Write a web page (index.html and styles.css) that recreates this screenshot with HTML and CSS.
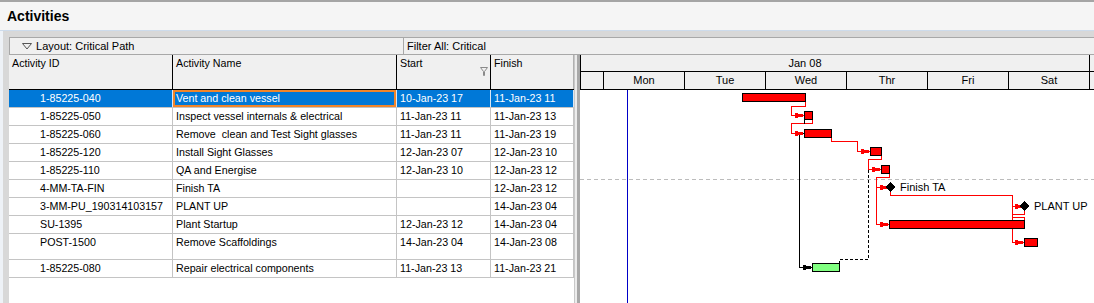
FILE: index.html
```html
<!DOCTYPE html>
<html lang="en">
<head>
  <meta charset="UTF-8">
  <title>Activities</title>
  <link rel="stylesheet" href="styles.css">
</head>
<body>

  <div class="title-bar">Activities</div>

  <div class="panel">
    <!-- layout and filter strip -->
    <div class="options-bar">
      <div class="layout-name">
        <svg class="drop" width="10" height="7" viewBox="0 0 10 7"><polygon points="0.5,0.5 9.5,0.5 5,6" fill="none" stroke="#555"/></svg>
        Layout: Critical Path
      </div>
      <div class="filter-name">Filter All: Critical</div>
    </div>

    <div class="views">
      <!-- activity table -->
      <div class="table">
        <div class="row head">
          <div class="cell">Activity ID</div>
          <div class="cell">Activity Name</div>
          <div class="cell sorted">
            <span>Start</span>
            <svg class="sort-mark" width="8" height="9" viewBox="0 0 8 9"><path d="M0.5 0.5 H7.5 L4.5 4.5 V8.5 H3.5 V4.5 Z" fill="none" stroke="#8a8a8a"/></svg>
          </div>
          <div class="cell">Finish</div>
        </div>

        <div class="row selected">
          <div class="cell id">1-85225-040</div>
          <div class="cell name">Vent and clean vessel</div>
          <div class="cell">10-Jan-23 17</div>
          <div class="cell">11-Jan-23 11</div>
        </div>
        <div class="row">
          <div class="cell id">1-85225-050</div>
          <div class="cell">Inspect vessel internals &amp; electrical</div>
          <div class="cell">11-Jan-23 11</div>
          <div class="cell">11-Jan-23 13</div>
        </div>
        <div class="row">
          <div class="cell id">1-85225-060</div>
          <div class="cell">Remove &nbsp;clean and Test Sight glasses</div>
          <div class="cell">11-Jan-23 11</div>
          <div class="cell">11-Jan-23 19</div>
        </div>
        <div class="row">
          <div class="cell id">1-85225-120</div>
          <div class="cell">Install Sight Glasses</div>
          <div class="cell">12-Jan-23 07</div>
          <div class="cell">12-Jan-23 10</div>
        </div>
        <div class="row">
          <div class="cell id">1-85225-110</div>
          <div class="cell">QA and Energise</div>
          <div class="cell">12-Jan-23 10</div>
          <div class="cell">12-Jan-23 12</div>
        </div>
        <div class="row">
          <div class="cell id">4-MM-TA-FIN</div>
          <div class="cell">Finish TA</div>
          <div class="cell"></div>
          <div class="cell">12-Jan-23 12</div>
        </div>
        <div class="row">
          <div class="cell id">3-MM-PU_190314103157</div>
          <div class="cell">PLANT UP</div>
          <div class="cell"></div>
          <div class="cell">14-Jan-23 04</div>
        </div>
        <div class="row">
          <div class="cell id">SU-1395</div>
          <div class="cell">Plant Startup</div>
          <div class="cell">12-Jan-23 12</div>
          <div class="cell">14-Jan-23 04</div>
        </div>
        <div class="row tall">
          <div class="cell id">POST-1500</div>
          <div class="cell">Remove Scaffoldings</div>
          <div class="cell">14-Jan-23 04</div>
          <div class="cell">14-Jan-23 08</div>
        </div>
        <div class="row">
          <div class="cell id">1-85225-080</div>
          <div class="cell">Repair electrical components</div>
          <div class="cell">11-Jan-23 13</div>
          <div class="cell">11-Jan-23 21</div>
        </div>
      </div>

      <div class="splitter"></div>

      <!-- gantt chart -->
      <div class="gantt">
        <div class="timescale">
          <div class="week">
            <div class="week-cell">Jan 08</div>
          </div>
          <div class="days">
            <div class="day first"></div>
            <div class="day">Mon</div>
            <div class="day">Tue</div>
            <div class="day">Wed</div>
            <div class="day">Thr</div>
            <div class="day">Fri</div>
            <div class="day">Sat</div>
          </div>
        </div>

        <svg class="chart" width="514" height="213" viewBox="0 0 514 213" shape-rendering="crispEdges">
          <!-- data date + group divider -->
          <line x1="47.5" y1="0" x2="47.5" y2="213" stroke="#0000c8"/>
          <line x1="0" y1="89.5" x2="514" y2="89.5" stroke="#bcbcbc" stroke-dasharray="4 3"/>

          <!-- critical links -->
          <g fill="none" stroke="#ff0000">
            <polyline points="225.5,12 225.5,16.5 211.5,16.5 211.5,25.5 224,25.5"/>
            <polyline points="232.5,30 232.5,33.5 211.5,33.5 211.5,43.5 224,43.5"/>
            <polyline points="251.5,48 251.5,51.5 277.5,51.5 277.5,61.5 290,61.5"/>
            <polyline points="301.5,66 301.5,69.5 288.5,69.5 288.5,79.5 301,79.5"/>
            <polyline points="309.5,84 309.5,87.5 296.5,87.5 296.5,134.5 309,134.5"/>
            <polyline points="296.5,97.5 306,97.5"/>
            <polyline points="310.5,101 310.5,105.5 432.5,105.5 432.5,152.5 444,152.5"/>
            <polyline points="432.5,116.5 440,116.5"/>
            <polyline points="444.5,120 444.5,124.5 432.5,124.5"/>
            <polyline points="444.5,130 444.5,127.5 432.5,127.5"/>
          </g>

          <!-- non critical links -->
          <g fill="none" stroke="#000">
            <line x1="224.5" y1="30" x2="224.5" y2="34"/>
            <polyline points="224,43.5 219.5,43.5 219.5,177.5 232,177.5"/>
            <polyline points="288.5,80 288.5,169.5 259.5,169.5 259.5,173" stroke-dasharray="3 2"/>
          </g>

          <!-- arrow heads -->
          <g fill="#ff0000">
            <rect x="215" y="23" width="3" height="5"/><rect x="218" y="24" width="5" height="3"/>
            <rect x="215" y="41" width="3" height="5"/><rect x="218" y="42" width="5" height="3"/>
            <rect x="281" y="59" width="3" height="5"/><rect x="284" y="60" width="5" height="3"/>
            <rect x="292" y="77" width="3" height="5"/><rect x="295" y="78" width="5" height="3"/>
            <rect x="300" y="95" width="3" height="5"/><rect x="303" y="96" width="4" height="3"/>
            <rect x="435" y="114" width="3" height="5"/><rect x="438" y="115" width="3" height="3"/>
            <rect x="300" y="132" width="3" height="5"/><rect x="303" y="133" width="5" height="3"/>
            <rect x="435" y="150" width="3" height="5"/><rect x="438" y="151" width="5" height="3"/>
          </g>
          <g fill="#000">
            <rect x="223" y="175" width="3" height="5"/><rect x="226" y="176" width="5" height="3"/>
          </g>

          <!-- bars -->
          <g stroke="#000">
            <rect x="162.5" y="3.5" width="63" height="8" fill="#ff0000"/>
            <rect x="224.5" y="21.5" width="8" height="8" fill="#ff0000"/>
            <rect x="224.5" y="39.5" width="27" height="8" fill="#ff0000"/>
            <rect x="290.5" y="57.5" width="11" height="8" fill="#ff0000"/>
            <rect x="301.5" y="75.5" width="8" height="8" fill="#ff0000"/>
            <rect x="309.5" y="130.5" width="135" height="8" fill="#ff0000"/>
            <rect x="444.5" y="148.5" width="13" height="8" fill="#ff0000"/>
            <rect x="232.5" y="173.5" width="27" height="8" fill="#80ff80"/>
          </g>

          <!-- milestones -->
          <polygon points="310,92 315,97 310,102 305,97" fill="#000"/>
          <polygon points="444,111 449,116 444,121 439,116" fill="#000"/>
          <text x="320" y="101" class="label">Finish TA</text>
          <text x="454" y="120" class="label">PLANT UP</text>
        </svg>
      </div>
    </div>
  </div>

</body>
</html>
```

FILE: styles.css
```css
body {
  margin: 0;
  font-family: 'Liberation Sans', Arial, sans-serif;
  font-size: 11px;
  color: #000;
  background: #eef2f7;
  overflow: hidden;
}

.title-bar {
  height: 27px;
  padding: 1px 0 0 7px;
  border-top: 2px solid #a5a5a5;
  border-bottom: 1px solid #cddbeb;
  background: #f5f5f5;
  font-size: 14px;
  font-weight: bold;
  line-height: 27px;
}

.panel {
  margin-left: 3px;
  padding: 6px 0 0 6px;
  background: #d8d8d8;
}

.options-bar {
  display: flex;
  height: 16px;
  line-height: 16px;
  border-top: 1px solid #a8a8a8;
  border-bottom: 1px solid #a8a8a8;
  background: #f0f0f0;
}

.layout-name {
  width: 395px;
  padding-left: 12px;
  box-sizing: border-box;
  border-left: 1px solid #a8a8a8;
  border-right: 1px solid #a8a8a8;
}

.drop {
  margin-right: 1px;
}

.filter-name {
  flex: 1;
  padding-left: 3px;
}

.views {
  display: flex;
  height: 248px;
}

/* table */

.table {
  width: 565px;
  flex: none;
  background: #fff;
  font-size: 10.7px;
}

.row {
  display: grid;
  grid-template-columns: 164px 224px 94px 83px;
  height: 17px;
  line-height: 17px;
  border-bottom: 1px solid #c4c4c4;
  white-space: nowrap;
}

.row.tall {
  height: 25px;
}

.cell {
  padding-left: 3px;
  border-right: 1px solid #c4c4c4;
  overflow: hidden;
}

.cell.id {
  padding-left: 31px;
}

.row.head {
  height: 34px;
  line-height: 15px;
  border-bottom: 1px solid #000;
  background: #f0f0f0;
}

.row.head .cell {
  padding-top: 1px;
  border-right-color: #000;
}

.row.head .cell:last-child {
  border-right-color: #b0b0b0;
}

.cell.sorted {
  display: flex;
  justify-content: space-between;
}

.sort-mark {
  margin: 11px 2px 0 0;
}

.row.selected {
  background: #0078d7;
  color: #fff;
}

.row.selected .cell {
  border-right-color: #d8e6f4;
}

.row.selected .name {
  box-shadow: inset 0 0 0 2px #f0852a;
}

.splitter {
  width: 6px;
  flex: none;
  background: linear-gradient(to right, #c8c8c8 0 1px, #ececec 1px 3px, #a8a8a8 3px);
}

/* gantt */

.gantt {
  flex: 1;
  background: #fff;
}

.timescale {
  background: #f0f0f0;
}

.week {
  height: 16px;
  line-height: 16px;
  border-bottom: 1px solid #000;
}

.week-cell {
  width: 510px;
  padding-right: 60px;
  box-sizing: border-box;
  border-left: 1px solid #000;
  border-right: 1px solid #000;
  text-align: center;
}

.days {
  display: flex;
  height: 17px;
  line-height: 17px;
  border-bottom: 1px solid #000;
}

.day {
  width: 81px;
  flex: none;
  box-sizing: border-box;
  border-right: 1px solid #000;
  text-align: center;
}

.day.first {
  width: 24px;
  border-left: 1px solid #000;
}

.chart {
  display: block;
}

.label {
  font-family: 'Liberation Sans', Arial, sans-serif;
  font-size: 11px;
  fill: #000;
}
```
